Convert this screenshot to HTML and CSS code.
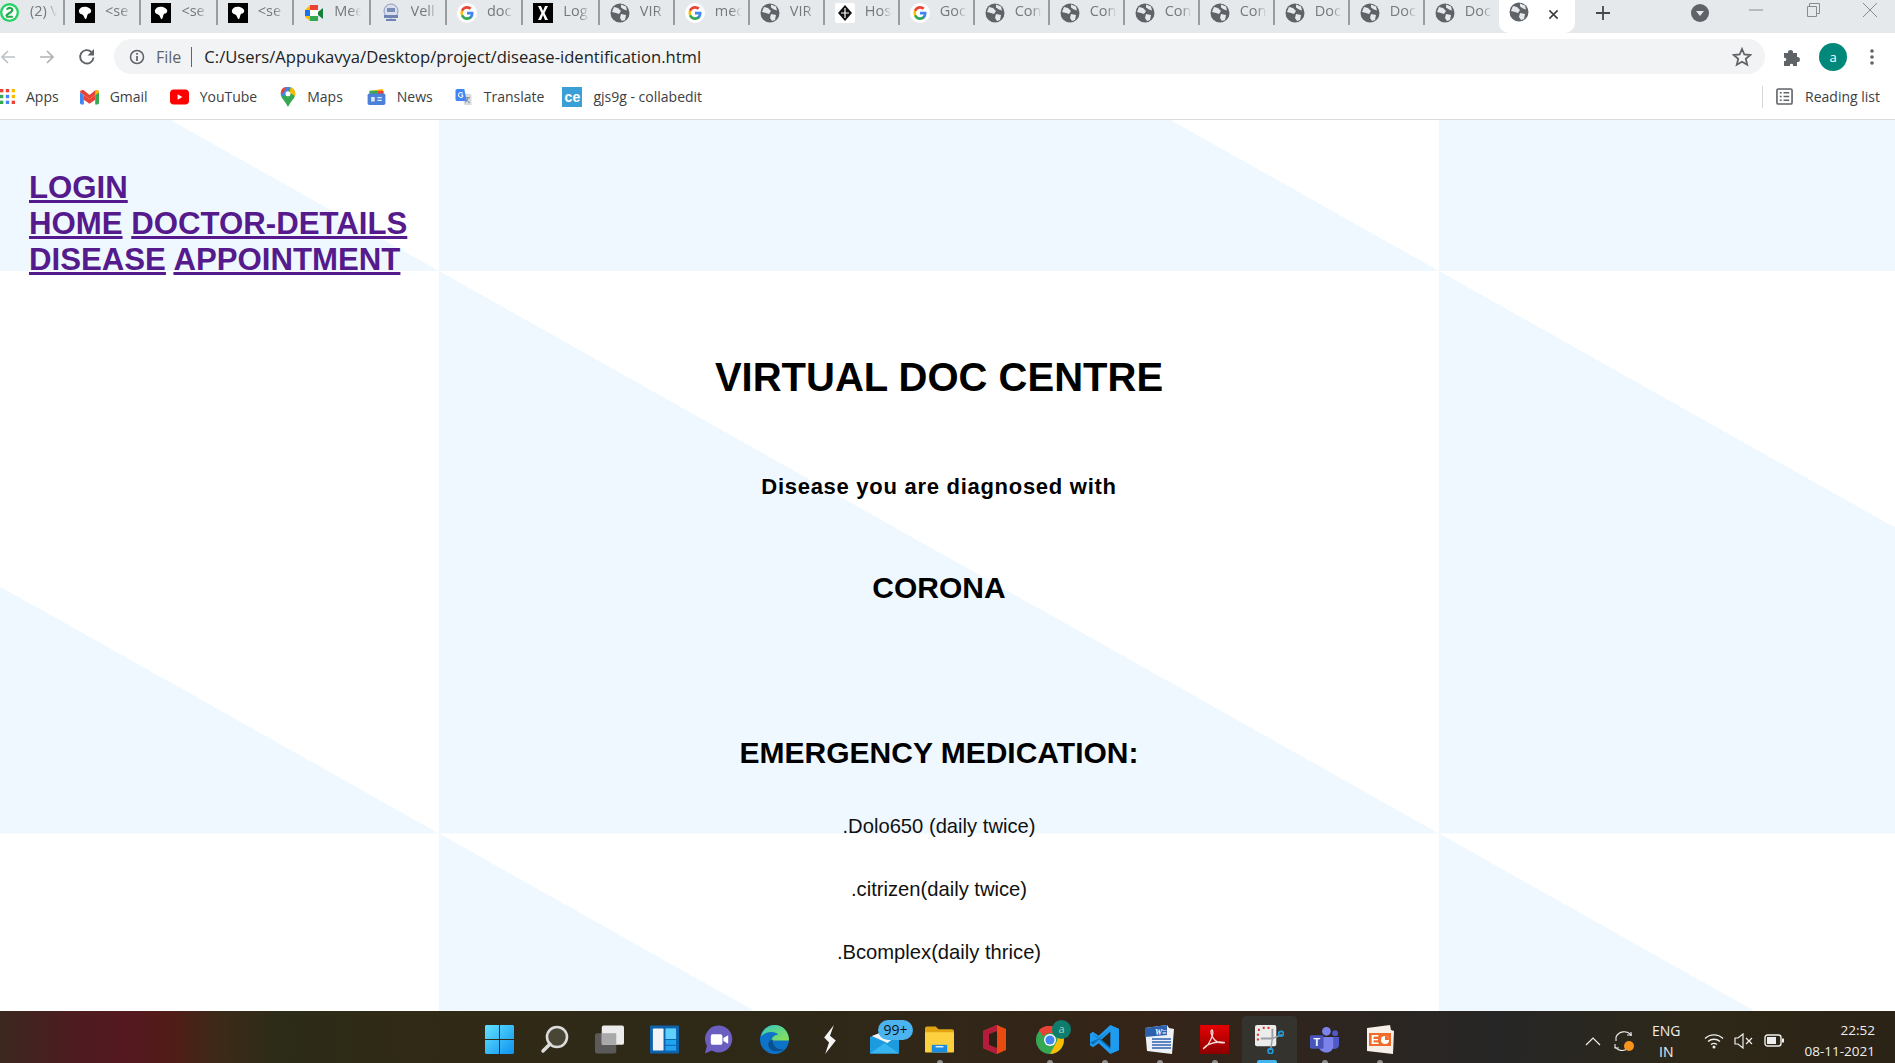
FILE: index.html
```html
<!DOCTYPE html>
<html lang="en">
<head>
<meta charset="utf-8">
<title>Disease identification</title>
<link rel="stylesheet" href="styles.css">
</head>
<body>
<svg class="sprite" width="0" height="0" aria-hidden="true">
  <symbol id="globe" viewBox="0 0 20 20"><circle cx="10" cy="10" r="9.500" fill="#5f6368"/><path d="M4 4l4 1 3 3-2 3-3-1-4-1zM11 11l5 1-1 5-3 1-2-3zM11 1.500l5 2 1 4-3-1-3-2z" fill="#e6e9ec"/></symbol>
  <symbol id="seal" viewBox="0 0 20 20"><rect width="20" height="20" fill="#000"/><path d="M4 7c1-3 5-4 8-3s5 3 4 5-2 1-3 2-1 4-2 5-2-3-3-4-5-1-4-5z" fill="#fff"/></symbol>
  <symbol id="google" viewBox="0 0 20 20"><circle cx="10" cy="10" r="10" fill="#fff"/><path d="M16.500 10.200c0-.5 0-1-.1-1.400H10v2.700h3.700c-.2.900-.7 1.600-1.400 2.100v1.700h2.300c1.200-1.200 1.900-3 1.900-5.100z" fill="#4285f4"/><path d="M10 17c1.900 0 3.400-.6 4.600-1.700l-2.300-1.700c-.6.400-1.400.7-2.300.7-1.800 0-3.300-1.200-3.900-2.800H4.100v1.800C5.300 15.500 7.500 17 10 17z" fill="#34a853"/><path d="M6.100 11.500c-.3-.9-.3-1.900 0-2.900V6.800H4.100c-.8 1.600-.8 3.500 0 6.300z" fill="#fbbc05"/><path d="M10 5.800c1 0 1.900.4 2.600 1l2-2C13.400 3.700 11.800 3 10 3 7.500 3 5.300 4.500 4.100 6.800l2 1.800C6.700 7 8.200 5.800 10 5.800z" fill="#ea4335"/></symbol>
</svg>

<div class="screen">
  <header class="tabstrip">
    <div class="tab tab-first"><svg class="fav fav-wa" viewBox="0 0 20 20"><circle cx="10" cy="10" r="10" fill="#25d366"/><circle cx="10" cy="10" r="7.500" fill="#fff"/><path d="M6.500 14c0-3 6.500-3.500 6.500-7 0-2.500-5.500-2.500-5.500 0M6.500 14.500H13.500" fill="none" stroke="#1faa4c" stroke-width="2.200"/></svg><span class="tab-title">(2) V</span></div>
    <div class="tab tab-wide"><svg class="fav"><use href="#seal"/></svg><span class="tab-title">&lt;se</span></div>
    <div class="tab tab-wide"><svg class="fav"><use href="#seal"/></svg><span class="tab-title">&lt;se</span></div>
    <div class="tab tab-wide"><svg class="fav"><use href="#seal"/></svg><span class="tab-title">&lt;se</span></div>
    <div class="tab tab-wide"><svg class="fav" viewBox="0 0 20 20"><path d="M1 7l5-5h8v16H6l-5-4z" fill="#fbbc05"/><path d="M6 2h8v5H6z" fill="#ea4335"/><path d="M1 7h5v6H1z" fill="#1a73e8"/><path d="M6 13h8v5H6z" fill="#34a853"/><path d="M6 7h8v6H6z" fill="#fff"/><path d="M14 9l5-4v11l-5-4z" fill="#188038"/></svg><span class="tab-title">Mee</span></div>
    <div class="tab tab-wide"><svg class="fav" viewBox="0 0 20 20"><circle cx="10" cy="8" r="7" fill="#d9dfea" stroke="#8c9ac2"/><path d="M3 12h14v3H3zM5 16h10v2H5z" fill="#6f83b5"/><path d="M6 5h8v4H6z" fill="#7a8cb8"/></svg><span class="tab-title">Vell</span></div>
    <div class="tab tab-wide"><svg class="fav"><use href="#google"/></svg><span class="tab-title">doc</span></div>
    <div class="tab tab-wide"><svg class="fav" viewBox="0 0 20 20"><rect width="20" height="20" fill="#000"/><path d="M5 3h3l2 5 2-5h3l-3.500 7L15 17h-3l-2-5-2 5H5l3.500-7z" fill="#fff"/></svg><span class="tab-title">Log</span></div>
    <div class="tab"><svg class="fav"><use href="#globe"/></svg><span class="tab-title">VIR</span></div>
    <div class="tab"><svg class="fav"><use href="#google"/></svg><span class="tab-title">mec</span></div>
    <div class="tab"><svg class="fav"><use href="#globe"/></svg><span class="tab-title">VIR</span></div>
    <div class="tab"><svg class="fav" viewBox="0 0 20 20"><rect width="20" height="20" rx="2" fill="#fff"/><path d="M10 2l7 8-7 8-7-8z" fill="#111"/><path d="M10 5v10M6 10h8" stroke="#fff" stroke-width="1.200"/></svg><span class="tab-title">Hos</span></div>
    <div class="tab"><svg class="fav"><use href="#google"/></svg><span class="tab-title">Goc</span></div>
    <div class="tab"><svg class="fav"><use href="#globe"/></svg><span class="tab-title">Con</span></div>
    <div class="tab"><svg class="fav"><use href="#globe"/></svg><span class="tab-title">Con</span></div>
    <div class="tab"><svg class="fav"><use href="#globe"/></svg><span class="tab-title">Con</span></div>
    <div class="tab"><svg class="fav"><use href="#globe"/></svg><span class="tab-title">Con</span></div>
    <div class="tab"><svg class="fav"><use href="#globe"/></svg><span class="tab-title">Doc</span></div>
    <div class="tab"><svg class="fav"><use href="#globe"/></svg><span class="tab-title">Doc</span></div>
    <div class="tab tab-last"><svg class="fav"><use href="#globe"/></svg><span class="tab-title">Doc</span></div>
    <div class="tab-active"><svg class="fav"><use href="#globe"/></svg><svg class="tab-close" viewBox="0 0 12 12"><path d="M1.500 1.500l9 9M10.500 1.500l-9 9" stroke="#3c4043" stroke-width="1.700"/></svg></div>
    <svg class="new-tab" viewBox="0 0 16 16"><path d="M8 1v14M1 8h14" stroke="#45484c" stroke-width="1.800"/></svg>
    <svg class="tab-search" viewBox="0 0 18 18"><circle cx="9" cy="9" r="9" fill="#5f6368"/><path d="M5 7h8l-4 5z" fill="#e6e9ec"/></svg>
    <div class="window-controls">
      <svg class="win-btn" viewBox="0 0 14 14"><path d="M0 7h14" stroke="#888b8f"/></svg>
      <svg class="win-btn" viewBox="0 0 14 14"><path d="M1.500 3.500h9v10h-9zM3.500 3.500v-3h10v10h-3" fill="none" stroke="#888b8f"/></svg>
      <svg class="win-btn" viewBox="0 0 14 14"><path d="M0 0l14 14M14 0L0 14" stroke="#888b8f"/></svg>
    </div>
  </header>

  <div class="toolbar">
    <svg class="nav-icon nav-back" viewBox="0 0 16 16"><path d="M15 8H2M8 2L2 8l6 6" fill="none" stroke="#bfc2c6" stroke-width="1.700"/></svg>
    <svg class="nav-icon nav-forward" viewBox="0 0 16 16"><path d="M1 8h13M8 2l6 6-6 6" fill="none" stroke="#aeb1b5" stroke-width="1.700"/></svg>
    <svg class="nav-icon nav-reload" viewBox="0 0 18 18"><path d="M15.500 9.500A6.700 6.700 0 1 1 13.500 4" fill="none" stroke="#5f6368" stroke-width="1.900"/><path d="M16 1v6.500H9.500z" fill="#5f6368"/></svg>
    <div class="omnibox">
      <svg class="info-icon" viewBox="0 0 16 16"><circle cx="8" cy="8" r="6.500" fill="none" stroke="#5f6368" stroke-width="1.500"/><path d="M8 7v5M8 4v1.800" stroke="#5f6368" stroke-width="1.700"/></svg>
      <span class="scheme">File</span>
      <span class="omni-sep"></span>
      <span class="url">C:/Users/Appukavya/Desktop/project/disease-identification.html</span>
      <svg class="star-icon" viewBox="0 0 20 20"><path d="M10 2l2.400 5.500 6 .5-4.600 3.900 1.400 5.900L10 14.800l-5.200 3 1.400-5.900L1.600 8l6-.5z" fill="none" stroke="#5f6368" stroke-width="1.800"/></svg>
    </div>
    <svg class="puzzle-icon" viewBox="0 0 20 20"><path d="M2 6h4c-1-4 6-4 5 0h4v4c4-1 4 6 0 5v4h-4c1-3-4-3-3 0H2v-5c3 1 3-4 0-3z" fill="#5f6368"/></svg>
    <div class="avatar">a</div>
    <svg class="menu-icon" viewBox="0 0 4 16"><circle cx="2" cy="2" r="1.800" fill="#5f6368"/><circle cx="2" cy="8" r="1.800" fill="#5f6368"/><circle cx="2" cy="14" r="1.800" fill="#5f6368"/></svg>
  </div>

  <nav class="bookmarks">
    <div class="bookmark bm-apps"><svg class="bm-icon bm-icon-apps" viewBox="0 0 18 18"><g><rect x="0" y="0" width="4" height="4" fill="#ea4335"/><rect x="7" y="0" width="4" height="4" fill="#ea4335"/><rect x="14" y="0" width="4" height="4" fill="#fbbc05"/><rect x="0" y="7" width="4" height="4" fill="#34a853"/><rect x="7" y="7" width="4" height="4" fill="#4285f4"/><rect x="14" y="7" width="4" height="4" fill="#fbbc05"/><rect x="0" y="14" width="4" height="4" fill="#34a853"/><rect x="7" y="14" width="4" height="4" fill="#4285f4"/><rect x="14" y="14" width="4" height="4" fill="#ea4335"/></g></svg>Apps</div>
    <div class="bookmark bm-gmail"><svg class="bm-icon" viewBox="0 0 20 16"><path d="M0 3v11c0 1 1 2 2 2h2V6z" fill="#4285f4"/><path d="M20 3v11c0 1-1 2-2 2h-2V6z" fill="#34a853"/><path d="M4 6v5l6 4 6-4V6l-6 4z" fill="#ea4335"/><path d="M0 3c0-2 3-3 4-2l6 5 6-5c1-1 4 0 4 2l-4 3-6 4-6-4z" fill="#ea4335"/><path d="M16 1c1-1 4 0 4 2l-4 3z" fill="#fbbc05"/></svg>Gmail</div>
    <div class="bookmark bm-yt"><svg class="bm-icon" viewBox="0 0 20 16"><rect width="20" height="16" rx="4" fill="#f00"/><path d="M8 5l5 3-5 3z" fill="#fff"/></svg>YouTube</div>
    <div class="bookmark bm-maps"><svg class="bm-icon bm-icon-maps" viewBox="0 0 16 22"><path d="M8 0c4.500 0 8 3.300 8 7.600 0 5-5 7.400-8 14.400-3-7-8-9.400-8-14.400C0 3.300 3.500 0 8 0z" fill="#34a853"/><path d="M1 4l5-4h5L3 11 1 8z" fill="#4285f4"/><path d="M11 0c3 1 5 4 5 7.600 0 1-.2 1.800-.5 2.400L10 6z" fill="#fbbc05"/><path d="M1 3C2 1 4 0 6 0L3 7H0z" fill="#ea4335"/><circle cx="8" cy="7.500" r="2.800" fill="#fff"/></svg>Maps</div>
    <div class="bookmark bm-news"><svg class="bm-icon" viewBox="0 0 20 18"><path d="M3 2l14-2 1 6H3z" fill="#fbbc05"/><path d="M2 2h9v5H2z" fill="#34a853"/><path d="M11 2h7v5h-7z" fill="#ea4335"/><rect x="0" y="5" width="20" height="13" rx="2" fill="#4d80d8"/><path d="M4 9h4v5H4zM11 9h5v1.500h-5zM11 12h5v1.500h-5z" fill="#dfe8f8"/></svg>News</div>
    <div class="bookmark bm-translate"><svg class="bm-icon" viewBox="0 0 20 20"><path d="M8 6h10c1 0 2 1 2 2v12H11z" fill="#d8dbe0"/><path d="M13 11h5M15.500 10v1c-.5 3-2 5-3.500 6M14 13c.5 2 2 3.500 4 4" stroke="#70757a" fill="none"/><path d="M2 0h9l3 15H2c-1 0-2-1-2-2V2c0-1 1-2 2-2z" fill="#4285f4"/><path d="M9 5.500A3 3 0 1 0 9 9.500V7.500H7" fill="none" stroke="#fff" stroke-width="1.300"/></svg>Translate</div>
    <div class="bookmark bm-ce"><span class="ce-icon">ce</span>gjs9g - collabedit</div>
    <div class="reading-list"><svg class="list-icon" viewBox="0 0 18 18"><rect x="1" y="1" width="16" height="16" rx="1.500" fill="none" stroke="#5f6368" stroke-width="1.700"/><path d="M4 5h2M8 5h6M4 9h2M8 9h6M4 13h2M8 13h6" stroke="#5f6368" stroke-width="1.500"/></svg>Reading list</div>
  </nav>

  <main class="page">
    <div class="links">
      <div><a class="link" href="#">LOGIN</a></div>
      <div><a class="link" href="#">HOME</a> <a class="link" href="#">DOCTOR-DETAILS</a></div>
      <div><a class="link" href="#">DISEASE</a> <a class="link" href="#">APPOINTMENT</a></div>
    </div>
    <section class="result">
      <h1 class="title">VIRTUAL DOC CENTRE</h1>
      <h3 class="sub">Disease you are diagnosed with</h3>
      <h2 class="disease">CORONA</h2>
      <h2 class="emergency">EMERGENCY MEDICATION:</h2>
      <p class="med">.Dolo650 (daily twice)</p>
      <p class="med">.citrizen(daily twice)</p>
      <p class="med">.Bcomplex(daily thrice)</p>
    </section>
  </main>

  <footer class="taskbar">
    <div class="slot"><svg class="tb" viewBox="0 0 29 29"><defs><linearGradient id="w" x1="0" y1="0" x2="1" y2="1"><stop offset="0" stop-color="#63e2ff"/><stop offset="1" stop-color="#0d93ee"/></linearGradient></defs><path d="M1 0h13v14H0V1zM15 0h13l1 1v13H15zM0 15h14v14H1l-1-1zM15 15h14v13l-1 1H15z" fill="url(#w)"/></svg></div>
    <div class="slot"><svg class="tb" viewBox="0 0 29 29"><circle cx="17" cy="12" r="10" fill="#4a4636" stroke="#dcdcdc" stroke-width="2.600"/><path d="M10 19l-7 7" stroke="#dcdcdc" stroke-width="3.500" stroke-linecap="round"/></svg></div>
    <div class="slot"><svg class="tb" viewBox="0 0 30 29"><rect x="0" y="8" width="22" height="21" rx="2" fill="#5b5a58"/><rect x="7" y="0" width="23" height="20" rx="2" fill="#ececec"/><rect x="7" y="8" width="15" height="12" fill="#a9a9a9"/></svg></div>
    <div class="slot"><svg class="tb" viewBox="0 0 30 29"><rect width="30" height="29" rx="1" fill="#0f63ad"/><rect x="3" y="3" width="11" height="23" rx="1" fill="#f2f3f5"/><rect x="16" y="3" width="11" height="11" fill="#5fd0fb"/><rect x="16" y="15" width="11" height="5" fill="#21a4ef"/><rect x="16" y="21" width="11" height="5" fill="#21a4ef"/></svg></div>
    <div class="slot"><svg class="tb" viewBox="0 0 30 29"><path d="M15 0a14 14 0 1 1-8 26l-7 3 2-8A14 14 0 0 1 15 0z" fill="#6a5fc1"/><rect x="6" y="9" width="12" height="11" rx="2" fill="#fff"/><path d="M19 13l5-3v9l-5-3z" fill="#fff"/></svg></div>
    <div class="slot"><svg class="tb" viewBox="0 0 30 30"><defs><linearGradient id="e" x1="0" y1="0" x2="1" y2="1"><stop offset="0" stop-color="#36c8c0"/><stop offset="1" stop-color="#8ee04f"/></linearGradient></defs><circle cx="15" cy="15" r="15" fill="#0d73c9"/><path d="M1 12C3 4 9 0 15 0c9 0 15 7 15 16H12c0-4 4-6 7-6-3-4-13-4-18 2z" fill="url(#e)"/><path d="M13 15c-5 1-6 7-2 10 3 3 9 3 14 0-6 1-12-2-12-10z" fill="#0a4f8e"/></svg></div>
    <div class="slot"><svg class="tb tb-bolt" viewBox="0 0 14 30"><path d="M11 0L1 13l5 5-4 12 11-14-6-5z" fill="#f4f4f4"/></svg></div>
    <div class="slot"><svg class="tb" viewBox="0 0 30 29"><path d="M0 12l24-10 6 8v19H0z" fill="#1c9bdf"/><path d="M2 11l18-7 6 8-8 6z" fill="#f2f4f6"/><path d="M0 29l15-11 15 11z" fill="#37b5ee"/></svg><span class="badge">99+</span></div>
    <div class="slot running"><svg class="tb" viewBox="0 0 30 27"><path d="M0 2c0-1 1-2 2-2h9l3 3h14c1 0 2 1 2 2v4H0z" fill="#e2a512"/><rect x="0" y="6" width="30" height="21" rx="1" fill="#fcd03f"/><path d="M7 19h16v8H7z" fill="#1c8ce0"/><path d="M11 21h8" stroke="#fff" stroke-width="1.300"/></svg></div>
    <div class="slot"><svg class="tb tb-office" viewBox="0 0 23 29"><path d="M0 6l14-6 9 4v21l-9 4-14-6z" fill="#e84a10"/><path d="M0 6l14-6v6L6 9v11l8 3v6L0 23z" fill="#b51c3b"/><path d="M6 9l8-3v17l-8-3z" fill="#2b2015"/></svg></div>
    <div class="slot running"><svg class="tb tb-chrome" viewBox="0 0 28 28"><circle cx="14" cy="14" r="14" fill="#34a853"/><path d="M14 0a14 14 0 0 1 12 7H14a7 7 0 0 0-6.500 4L3 4a14 14 0 0 1 11-4z" fill="#ea4335"/><path d="M26 7a14 14 0 0 1-12 21l6-11a7 7 0 0 0-1-10z" fill="#fbbc05"/><circle cx="14" cy="14" r="6" fill="#fff"/><circle cx="14" cy="14" r="4.600" fill="#4285f4"/></svg><span class="chrome-badge">a</span></div>
    <div class="slot running"><svg class="tb" viewBox="0 0 30 30"><path d="M21 0l9 4v22l-9 4-12-11-6 4-3-2V9l3-2 6 4z" fill="#1f9cf0"/><path d="M3 9.500l18 15.500V18L10 14 3 9.500zM21 5L3 20.500 0 18l9-4z" fill="#0a6fb8"/><path d="M21 7v16l-9-8z" fill="#2b2217"/></svg></div>
    <div class="slot running"><svg class="tb" viewBox="0 0 29 29"><path d="M0 3l22-3 2 3 5 1-2 25-25-3z" fill="#eef2f8"/><path d="M0 3l22-3v10l-22 2z" fill="#2e61ad"/><text class="word-w" x="10" y="9.500">W≡</text><path d="M7 14h19M7 17h19M7 20h19M7 23h19" stroke="#2e61ad" stroke-width="1.500"/></svg></div>
    <div class="slot running"><svg class="tb" viewBox="0 0 28 28"><defs><linearGradient id="a" x1="0" y1="0" x2="0" y2="1"><stop offset="0" stop-color="#e60000"/><stop offset="1" stop-color="#8b0000"/></linearGradient></defs><rect width="28" height="28" fill="url(#a)"/><path d="M3 23c4-2 7-7 9-13 1-3 0-6-1-5s0 5 2 8 6 5 11 4c-5-1-12 0-16 2-2 1-4 3-5 4z" fill="none" stroke="#f4dada" stroke-width="1.300"/></svg></div>
    <div class="slot slot-active"><svg class="tb" viewBox="0 0 30 30"><rect width="22" height="22" rx="2" fill="#ececec"/><path d="M3 5h2M8 3h2M13 3h2M3 9v2M3 14v2" stroke="#d9392b" stroke-width="2.200"/><path d="M6 14h12V4" fill="none" stroke="#9aa0a6" stroke-width="2"/><path d="M18 14l10-4M18 14l-2 12" stroke="#9aa0a6" stroke-width="1.500"/><circle cx="27" cy="9" r="2.500" fill="none" stroke="#1c9bdf" stroke-width="1.800"/><circle cx="16" cy="27" r="2.500" fill="none" stroke="#1c9bdf" stroke-width="1.800"/></svg></div>
    <div class="slot running"><svg class="tb" viewBox="0 0 30 27"><circle cx="17" cy="5" r="4.500" fill="#7b83eb"/><circle cx="26" cy="7" r="3" fill="#5059c9"/><path d="M21 11h9v8c0 3-3 5-6 4z" fill="#5059c9"/><path d="M9 11h15v10c0 3-3 6-7 6s-8-3-8-6z" fill="#7b83eb"/><rect x="0" y="9" width="14" height="14" rx="1.500" fill="#4b53bc"/><text class="teams-t" x="7" y="20">T</text></svg></div>
    <div class="slot running"><svg class="tb" viewBox="0 0 29 29"><path d="M2 3l23-3 1 5 3 1-1 23-26-3z" fill="#f6efe9"/><path d="M4 8h22v13H4z" fill="#ef6a2b"/><text class="ppt-t" x="6" y="19">E</text><circle cx="20" cy="15" r="4" fill="#fff"/><path d="M20 15v-4a4 4 0 0 1 4 4z" fill="#ef6a2b"/></svg></div>

    <div class="tray">
      <svg class="tray-chevron" viewBox="0 0 16 10"><path d="M1 9l7-7 7 7" fill="none" stroke="#efefef" stroke-width="1.200"/></svg>
      <div class="tray-sync"><svg viewBox="0 0 20 20" class="sync-icon"><path d="M18 4a9 9 0 0 0-15 2v4M2 16a9 9 0 0 0 12 2" fill="none" stroke="#efefef" stroke-width="1.100"/><path d="M14 4h5M18 1v4M2 13v4h4" fill="none" stroke="#efefef" stroke-width="1.100"/></svg><span class="sync-dot"></span></div>
      <div class="tray-lang"><span>ENG</span><span>IN</span></div>
      <svg class="wifi" viewBox="0 0 20 16"><path d="M1 5.500a13 13 0 0 1 18 0M4 8.500a9 9 0 0 1 12 0M7 11.500a5 5 0 0 1 6 0" fill="none" stroke="#efefef" stroke-width="1.400"/><circle cx="10" cy="14" r="1.500" fill="#efefef"/></svg>
      <svg class="speaker" viewBox="0 0 20 16"><path d="M1 5h3l5-4v14l-5-4H1z" fill="none" stroke="#efefef" stroke-width="1.200"/><path d="M12 5l6 6M18 5l-6 6" stroke="#efefef" stroke-width="1.200"/></svg>
      <svg class="battery" viewBox="0 0 20 13"><rect x="1" y="1" width="16" height="11" rx="2.500" fill="none" stroke="#efefef" stroke-width="1.400"/><rect x="3" y="3" width="9" height="7" fill="#efefef"/><rect x="18" y="4.500" width="2" height="4" fill="#efefef"/></svg>
      <div class="clock"><span>22:52</span><span>08-11-2021</span></div>
    </div>
  </footer>
</div>
</body>
</html>
```

FILE: styles.css
```css
* { box-sizing: border-box; }
html, body { margin: 0; height: 100%; overflow: hidden; }
body { font-family: "Liberation Sans", Arial, sans-serif; background: #fff; }
.sprite { position: absolute; }
svg { display: block; flex: none; }

.screen { height: 100vh; display: flex; flex-direction: column; }

/* Tab strip */
.tabstrip { height: 33px; flex: none; background: #e6e9ec; display: flex; align-items: flex-start; font-family: "Open Sans", sans-serif; }
.tab { width: 75px; height: 25px; padding-left: 10px; display: flex; align-items: center; gap: 10px; border-right: 2px solid #999ca0; flex: none; }
.tab-first { width: 65px; padding-left: 0; gap: 11px; }
.tab-wide { width: 76.400px; }
.tab-last { border-right: 0; width: 74px; }
.fav { width: 20px; height: 20px; flex: none; }
.fav-wa { width: 19px; height: 19px; }
.tab-title { font-size: 14.500px; line-height: 20px; color: #75787c; white-space: nowrap; width: 27px; margin-top: -3px; -webkit-mask-image: linear-gradient(90deg, #000 60%, transparent 100%); mask-image: linear-gradient(90deg, #000 60%, transparent 100%); }
.tab-active { width: 76px; height: 33px; background: #fff; border-radius: 0 0 10px 10px; display: flex; align-items: flex-start; padding: 2px 0 0 10px; flex: none; }
.tab-close { width: 11px; height: 11px; margin: 7px 0 0 19px; }
.new-tab { width: 16px; height: 16px; margin: 5px 0 0 20px; }
.tab-search { width: 18px; height: 18px; margin: 4px 0 0 80px; }
.window-controls { display: flex; gap: 43px; margin: 3px 0 0 40px; }
.win-btn { width: 14px; height: 14px; }

/* Toolbar */
.toolbar { height: 47px; flex: none; display: flex; align-items: center; background: #fff; }
.nav-icon { width: 16px; height: 16px; }
.nav-forward { margin-left: 23px; }
.nav-reload { width: 18px; height: 18px; margin-left: 23px; }
.omnibox { width: 1651px; height: 35px; margin-left: 18px; border-radius: 18px; background: #f1f3f4; display: flex; align-items: center; padding: 0 13px 0 15px; font-family: "Open Sans", sans-serif; }
.info-icon { width: 16px; height: 16px; }
.scheme { font-size: 16px; color: #5f6368; margin-left: 11px; }
.omni-sep { width: 1px; height: 20px; background: #5f6368; margin: 0 12px 0 10px; }
.url { font-size: 16.600px; color: #202124; white-space: nowrap; flex: 1; }
.star-icon { width: 20px; height: 20px; }
.puzzle-icon { width: 20px; height: 20px; margin-left: 17px; }
.avatar { width: 28px; height: 28px; margin-left: 17px; border-radius: 50%; background: #00897b; color: #fff; font: 13px "Open Sans", sans-serif; display: flex; align-items: center; justify-content: center; }
.menu-icon { width: 4px; height: 16px; margin-left: 23px; }

/* Bookmarks */
.bookmarks { height: 40px; flex: none; background: #fff; border-bottom: 1px solid #dadce0; display: flex; align-items: center; font: 14px "Open Sans", sans-serif; color: #3c4043; padding-bottom: 6px; }
.bookmark { display: flex; align-items: center; gap: 11px; white-space: nowrap; }
.bm-icon { width: 19px; height: 16px; }
.bm-icon-apps { width: 15px; height: 15px; }
.bm-icon-maps { width: 16px; height: 20px; }
.bm-apps { margin-right: 21px; }
.bm-gmail { margin-right: 22px; }
.bm-yt { margin-right: 23px; }
.bm-maps { margin-right: 24px; }
.bm-news { margin-right: 21px; }
.bm-translate { margin-right: 18px; }
.ce-icon { width: 20px; height: 20px; background: #3a9fd6; color: #fff; font: bold 14px "Liberation Sans", sans-serif; display: flex; align-items: center; justify-content: center; }
.reading-list { margin-left: auto; display: flex; align-items: center; gap: 12px; padding: 0 15px 0 13px; border-left: 1px solid #d5d7da; height: 22px; }
.list-icon { width: 17px; height: 17px; }

/* Page */
.page { flex: 1; min-height: 0; overflow: hidden; padding: 50px 8px 0 29px; background-color: #fff; background-image: linear-gradient(to top right, #f0f8ff 50%, #fff 50%); background-size: 1000px 562.500px; background-position: 439px 151px; }
.links { font-size: 31.200px; line-height: 36px; font-weight: bold; }
.link { color: #551a8b; }
.result { text-align: center; margin: 76px 17px 0 -21px; color: #000; }
.title { font-size: 40px; line-height: 46px; margin: 0; }
.sub { font-size: 22px; line-height: 26px; letter-spacing: .72px; margin: 74px 0 0; }
.disease { font-size: 30px; line-height: 36px; margin: 70px 0 0; }
.emergency { font-size: 30px; line-height: 36px; margin: 129px 0 0; }
.med { font-size: 20.200px; line-height: 23px; margin: 40px 0 0; color: #111; }
.emergency + .med { margin-top: 44px; }

/* Taskbar */
.taskbar { height: 52px; flex: none; display: flex; align-items: center; padding-left: 472px; position: relative; background: linear-gradient(90deg, #3c281f 0, #4c1c20 70px, #551821 130px, #511c17 170px, #3c2a18 220px, #2c2c18 280px, #302a16 400px, #2e2818 800px, #352418 1150px, #262626 1500px, #2e2818 1700px, #2b2316 100%); color: #efefef; font-family: "Open Sans", sans-serif; }
.slot { width: 55px; height: 52px; display: flex; align-items: center; justify-content: center; position: relative; flex: none; padding-top: 5px; }
.tb { width: 29px; height: 29px; }
.tb-bolt { width: 14px; }
.tb-office { width: 23px; }
.tb-chrome { width: 28px; height: 28px; }
.running::after { content: ""; position: absolute; left: 25px; bottom: 0; width: 6px; height: 3px; border-radius: 3px 3px 0 0; background: #8f8f8f; }
.slot-active { background: #35332e; border-radius: 4px 4px 0 0; height: 47px; margin-top: 5px; padding-top: 0; }
.slot-active::after { content: ""; position: absolute; left: 15px; bottom: 0; width: 20px; height: 3px; background: #42b4f0; border-radius: 2px 2px 0 0; }
.badge { position: absolute; top: 9px; left: 21px; width: 35px; height: 20px; border-radius: 10px; background: #4bb4f0; color: #111; font-size: 14px; line-height: 20px; text-align: center; }
.chrome-badge { position: absolute; top: 9px; left: 30px; width: 19px; height: 19px; border-radius: 50%; background: #0e7d6e; color: #9fd4c8; font-size: 11px; line-height: 18px; text-align: center; }
.word-w { font: italic bold 8px "Liberation Serif", serif; fill: #fff; }
.teams-t { font: bold 11px "Liberation Sans", sans-serif; fill: #fff; text-anchor: middle; }
.ppt-t { font: bold 12px "Liberation Sans", sans-serif; fill: #fff; }

.tray { margin-left: auto; display: flex; align-items: center; padding: 7px 20px 0 0; font-size: 14px; height: 52px; }
.tray-chevron { width: 16px; height: 10px; margin-right: 12px; }
.tray-sync { position: relative; width: 20px; height: 20px; margin-right: 19px; }
.sync-icon { width: 20px; height: 20px; }
.sync-dot { position: absolute; right: -1px; bottom: 0; width: 10px; height: 10px; border-radius: 50%; background: #f7941d; }
.tray-lang { display: flex; flex-direction: column; align-items: center; line-height: 21px; }
.wifi { width: 20px; height: 16px; margin-left: 23px; }
.speaker { width: 20px; height: 16px; margin-left: 10px; }
.battery { width: 20px; height: 13px; margin-left: 10px; }
.clock { display: flex; flex-direction: column; align-items: flex-end; line-height: 21px; margin-left: 21px; font-size: 13.500px; }
```
